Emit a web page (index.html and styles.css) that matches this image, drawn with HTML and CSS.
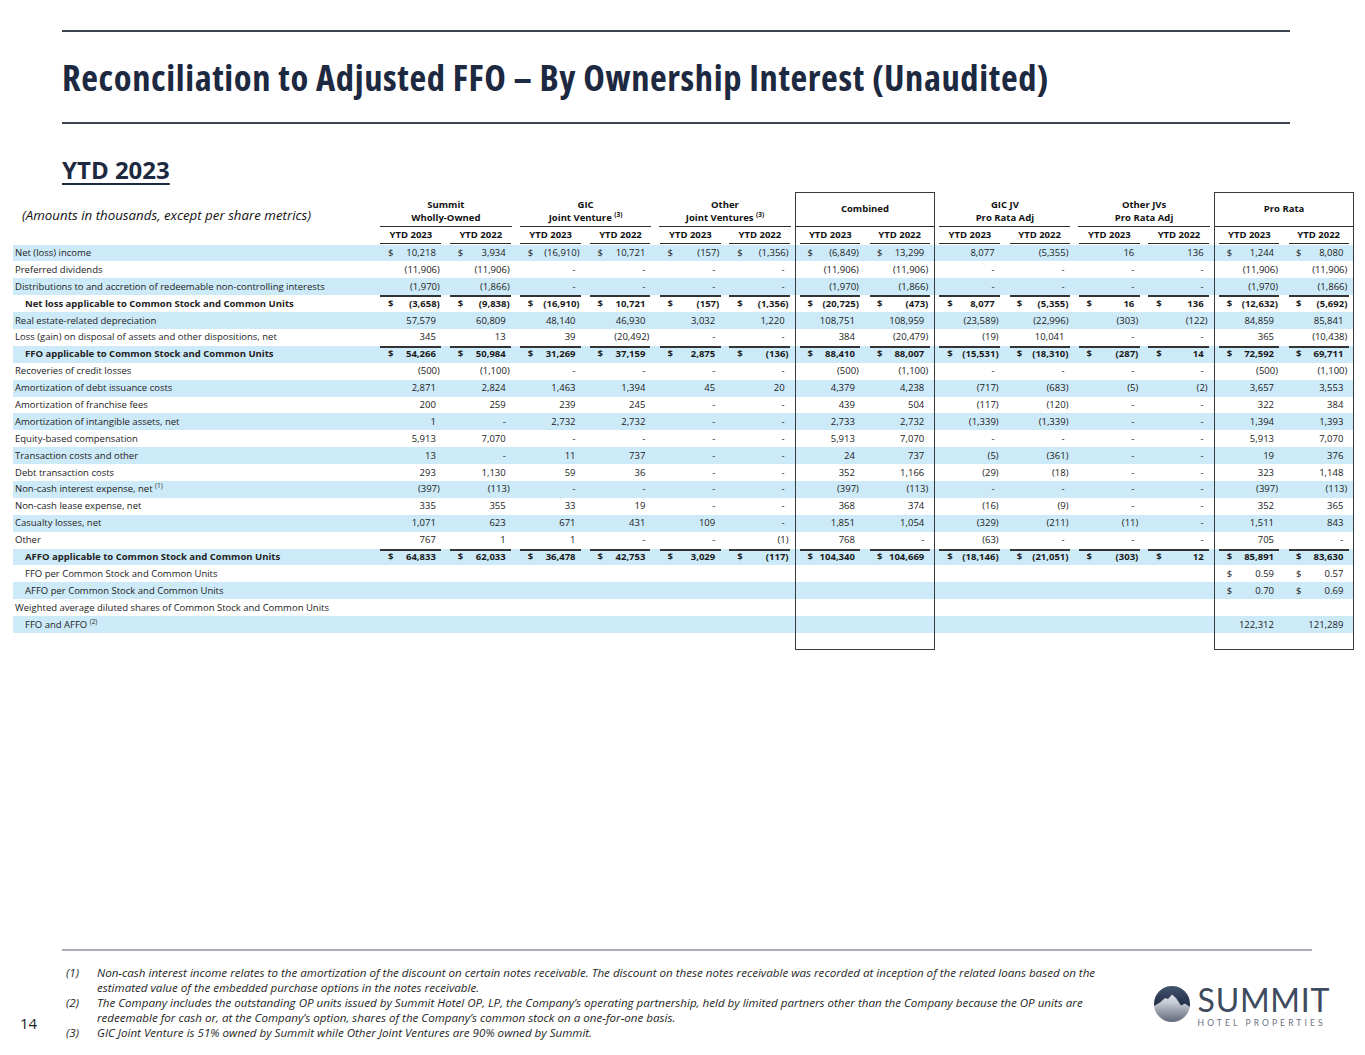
FILE: index.html
```html
<!DOCTYPE html>
<html lang="en">
<head>
<meta charset="utf-8">
<title>Reconciliation to Adjusted FFO</title>
<link rel="stylesheet" href="styles.css">
</head>
<body>
<div class="page">
  <header class="hdr">
    <h1 class="title">Reconciliation to Adjusted FFO – By Ownership Interest (Unaudited)</h1>
  </header>
  <h2 class="sub">YTD 2023</h2>

  <table class="tbl">
    <colgroup><col class="lc"></colgroup>
    <colgroup><col class="dc"><col class="dc"></colgroup>
    <colgroup><col class="dc"><col class="dc"></colgroup>
    <colgroup><col class="dc"><col class="dc"></colgroup>
    <colgroup class="box"><col class="dc"><col class="dc"></colgroup>
    <colgroup><col class="dc"><col class="dc"></colgroup>
    <colgroup><col class="dc"><col class="dc"></colgroup>
    <colgroup class="box"><col class="dc"><col class="dc"></colgroup>
    <thead>
      <tr class="ga">
        <th class="amt">(Amounts in thousands, except per share metrics)</th>
        <th colspan="2" class="g">Summit<br>Wholly-Owned</th>
        <th colspan="2" class="g">GIC<br>Joint Venture <sup>(3)</sup></th>
        <th colspan="2" class="g">Other<br>Joint Ventures <sup>(3)</sup></th>
        <th colspan="2" class="g gb">Combined</th>
        <th colspan="2" class="g">GIC JV<br>Pro Rata Adj</th>
        <th colspan="2" class="g">Other JVs<br>Pro Rata Adj</th>
        <th colspan="2" class="g gb">Pro Rata</th>
      </tr>
      <tr class="yr">
        <th class="blank"></th>
        <th>YTD 2023</th><th>YTD 2022</th>
        <th>YTD 2023</th><th>YTD 2022</th>
        <th>YTD 2023</th><th>YTD 2022</th>
        <th>YTD 2023</th><th>YTD 2022</th>
        <th>YTD 2023</th><th>YTD 2022</th>
        <th>YTD 2023</th><th>YTD 2022</th>
        <th>YTD 2023</th><th>YTD 2022</th>
      </tr>
    </thead>
    <tbody>
      <tr>
        <td class="l">Net (loss) income</td>
        <td><span class="c">$</span>10,218</td>
        <td><span class="c">$</span>3,934</td>
        <td class="n"><span class="c">$</span>(16,910)</td>
        <td><span class="c">$</span>10,721</td>
        <td class="n"><span class="c">$</span>(157)</td>
        <td class="n"><span class="c">$</span>(1,356)</td>
        <td class="n"><span class="c">$</span>(6,849)</td>
        <td><span class="c">$</span>13,299</td>
        <td>8,077</td>
        <td class="n">(5,355)</td>
        <td>16</td>
        <td>136</td>
        <td><span class="c">$</span>1,244</td>
        <td><span class="c">$</span>8,080</td>
      </tr>
      <tr>
        <td class="l">Preferred dividends</td>
        <td class="n">(11,906)</td><td class="n">(11,906)</td>
        <td>-</td><td>-</td><td>-</td><td>-</td>
        <td class="n">(11,906)</td><td class="n">(11,906)</td>
        <td>-</td><td>-</td><td>-</td><td>-</td>
        <td class="n">(11,906)</td><td class="n">(11,906)</td>
      </tr>
      <tr>
        <td class="l">Distributions to and accretion of redeemable non-controlling interests</td>
        <td class="n">(1,970)</td><td class="n">(1,866)</td>
        <td>-</td><td>-</td><td>-</td><td>-</td>
        <td class="n">(1,970)</td><td class="n">(1,866)</td>
        <td>-</td><td>-</td><td>-</td><td>-</td>
        <td class="n">(1,970)</td><td class="n">(1,866)</td>
      </tr>
      <tr class="t">
        <td class="l i">Net loss applicable to Common Stock and Common Units</td>
        <td class="n"><span class="c">$</span>(3,658)</td>
        <td class="n"><span class="c">$</span>(9,838)</td>
        <td class="n"><span class="c">$</span>(16,910)</td>
        <td><span class="c">$</span>10,721</td>
        <td class="n"><span class="c">$</span>(157)</td>
        <td class="n"><span class="c">$</span>(1,356)</td>
        <td class="n"><span class="c">$</span>(20,725)</td>
        <td class="n"><span class="c">$</span>(473)</td>
        <td><span class="c">$</span>8,077</td>
        <td class="n"><span class="c">$</span>(5,355)</td>
        <td><span class="c">$</span>16</td>
        <td><span class="c">$</span>136</td>
        <td class="n"><span class="c">$</span>(12,632)</td>
        <td class="n"><span class="c">$</span>(5,692)</td>
      </tr>
      <tr>
        <td class="l">Real estate-related depreciation</td>
        <td>57,579</td><td>60,809</td><td>48,140</td><td>46,930</td><td>3,032</td><td>1,220</td>
        <td>108,751</td><td>108,959</td>
        <td class="n">(23,589)</td><td class="n">(22,996)</td><td class="n">(303)</td><td class="n">(122)</td>
        <td>84,859</td><td>85,841</td>
      </tr>
      <tr>
        <td class="l">Loss (gain) on disposal of assets and other dispositions, net</td>
        <td>345</td><td>13</td><td>39</td><td class="n">(20,492)</td><td>-</td><td>-</td>
        <td>384</td><td class="n">(20,479)</td>
        <td class="n">(19)</td><td>10,041</td><td>-</td><td>-</td>
        <td>365</td><td class="n">(10,438)</td>
      </tr>
      <tr class="t">
        <td class="l i">FFO applicable to Common Stock and Common Units</td>
        <td><span class="c">$</span>54,266</td>
        <td><span class="c">$</span>50,984</td>
        <td><span class="c">$</span>31,269</td>
        <td><span class="c">$</span>37,159</td>
        <td><span class="c">$</span>2,875</td>
        <td class="n"><span class="c">$</span>(136)</td>
        <td><span class="c">$</span>88,410</td>
        <td><span class="c">$</span>88,007</td>
        <td class="n"><span class="c">$</span>(15,531)</td>
        <td class="n"><span class="c">$</span>(18,310)</td>
        <td class="n"><span class="c">$</span>(287)</td>
        <td><span class="c">$</span>14</td>
        <td><span class="c">$</span>72,592</td>
        <td><span class="c">$</span>69,711</td>
      </tr>
      <tr>
        <td class="l">Recoveries of credit losses</td>
        <td class="n">(500)</td><td class="n">(1,100)</td>
        <td>-</td><td>-</td><td>-</td><td>-</td>
        <td class="n">(500)</td><td class="n">(1,100)</td>
        <td>-</td><td>-</td><td>-</td><td>-</td>
        <td class="n">(500)</td><td class="n">(1,100)</td>
      </tr>
      <tr>
        <td class="l">Amortization of debt issuance costs</td>
        <td>2,871</td><td>2,824</td><td>1,463</td><td>1,394</td><td>45</td><td>20</td>
        <td>4,379</td><td>4,238</td>
        <td class="n">(717)</td><td class="n">(683)</td><td class="n">(5)</td><td class="n">(2)</td>
        <td>3,657</td><td>3,553</td>
      </tr>
      <tr>
        <td class="l">Amortization of franchise fees</td>
        <td>200</td><td>259</td><td>239</td><td>245</td><td>-</td><td>-</td>
        <td>439</td><td>504</td>
        <td class="n">(117)</td><td class="n">(120)</td><td>-</td><td>-</td>
        <td>322</td><td>384</td>
      </tr>
      <tr>
        <td class="l">Amortization of intangible assets, net</td>
        <td>1</td><td>-</td><td>2,732</td><td>2,732</td><td>-</td><td>-</td>
        <td>2,733</td><td>2,732</td>
        <td class="n">(1,339)</td><td class="n">(1,339)</td><td>-</td><td>-</td>
        <td>1,394</td><td>1,393</td>
      </tr>
      <tr>
        <td class="l">Equity-based compensation</td>
        <td>5,913</td><td>7,070</td><td>-</td><td>-</td><td>-</td><td>-</td>
        <td>5,913</td><td>7,070</td>
        <td>-</td><td>-</td><td>-</td><td>-</td>
        <td>5,913</td><td>7,070</td>
      </tr>
      <tr>
        <td class="l">Transaction costs and other</td>
        <td>13</td><td>-</td><td>11</td><td>737</td><td>-</td><td>-</td>
        <td>24</td><td>737</td>
        <td class="n">(5)</td><td class="n">(361)</td><td>-</td><td>-</td>
        <td>19</td><td>376</td>
      </tr>
      <tr>
        <td class="l">Debt transaction costs</td>
        <td>293</td><td>1,130</td><td>59</td><td>36</td><td>-</td><td>-</td>
        <td>352</td><td>1,166</td>
        <td class="n">(29)</td><td class="n">(18)</td><td>-</td><td>-</td>
        <td>323</td><td>1,148</td>
      </tr>
      <tr>
        <td class="l">Non-cash interest expense, net <sup>(1)</sup></td>
        <td class="n">(397)</td><td class="n">(113)</td><td>-</td><td>-</td><td>-</td><td>-</td>
        <td class="n">(397)</td><td class="n">(113)</td>
        <td>-</td><td>-</td><td>-</td><td>-</td>
        <td class="n">(397)</td><td class="n">(113)</td>
      </tr>
      <tr>
        <td class="l">Non-cash lease expense, net</td>
        <td>335</td><td>355</td><td>33</td><td>19</td><td>-</td><td>-</td>
        <td>368</td><td>374</td>
        <td class="n">(16)</td><td class="n">(9)</td><td>-</td><td>-</td>
        <td>352</td><td>365</td>
      </tr>
      <tr>
        <td class="l">Casualty losses, net</td>
        <td>1,071</td><td>623</td><td>671</td><td>431</td><td>109</td><td>-</td>
        <td>1,851</td><td>1,054</td>
        <td class="n">(329)</td><td class="n">(211)</td><td class="n">(11)</td><td>-</td>
        <td>1,511</td><td>843</td>
      </tr>
      <tr>
        <td class="l">Other</td>
        <td>767</td><td>1</td><td>1</td><td>-</td><td>-</td><td class="n">(1)</td>
        <td>768</td><td>-</td>
        <td class="n">(63)</td><td>-</td><td>-</td><td>-</td>
        <td>705</td><td>-</td>
      </tr>
      <tr class="t">
        <td class="l i">AFFO applicable to Common Stock and Common Units</td>
        <td><span class="c">$</span>64,833</td>
        <td><span class="c">$</span>62,033</td>
        <td><span class="c">$</span>36,478</td>
        <td><span class="c">$</span>42,753</td>
        <td><span class="c">$</span>3,029</td>
        <td class="n"><span class="c">$</span>(117)</td>
        <td><span class="c">$</span>104,340</td>
        <td><span class="c">$</span>104,669</td>
        <td class="n"><span class="c">$</span>(18,146)</td>
        <td class="n"><span class="c">$</span>(21,051)</td>
        <td class="n"><span class="c">$</span>(303)</td>
        <td><span class="c">$</span>12</td>
        <td><span class="c">$</span>85,891</td>
        <td><span class="c">$</span>83,630</td>
      </tr>
      <tr>
        <td class="l ii">FFO per Common Stock and Common Units</td>
        <td></td><td></td><td></td><td></td><td></td><td></td>
        <td></td><td></td><td></td><td></td><td></td><td></td>
        <td><span class="c">$</span>0.59</td><td><span class="c">$</span>0.57</td>
      </tr>
      <tr>
        <td class="l ii">AFFO per Common Stock and Common Units</td>
        <td></td><td></td><td></td><td></td><td></td><td></td>
        <td></td><td></td><td></td><td></td><td></td><td></td>
        <td><span class="c">$</span>0.70</td><td><span class="c">$</span>0.69</td>
      </tr>
      <tr>
        <td class="l">Weighted average diluted shares of Common Stock and Common Units</td>
        <td></td><td></td><td></td><td></td><td></td><td></td>
        <td></td><td></td><td></td><td></td><td></td><td></td>
        <td></td><td></td>
      </tr>
      <tr>
        <td class="l ii">FFO and AFFO <sup>(2)</sup></td>
        <td></td><td></td><td></td><td></td><td></td><td></td>
        <td></td><td></td><td></td><td></td><td></td><td></td>
        <td>122,312</td><td>121,289</td>
      </tr>
      <tr class="end">
        <td class="l"></td>
        <td></td><td></td><td></td><td></td><td></td><td></td>
        <td></td><td></td><td></td><td></td><td></td><td></td>
        <td></td><td></td>
      </tr>
    </tbody>
  </table>

  <footer class="ftr">
    <div class="rule"></div>
    <div class="frow">
      <div class="pg">14</div>
      <ol class="notes">
        <li><span class="num">(1)</span><span class="txt">Non-cash interest income relates to the amortization of the discount on certain notes receivable. The discount on these notes receivable was recorded at inception of the related loans based on the<br>estimated value of the embedded purchase options in the notes receivable.</span></li>
        <li><span class="num">(2)</span><span class="txt">The Company includes the outstanding OP units issued by Summit Hotel OP, LP, the Company’s operating partnership, held by limited partners other than the Company because the OP units are<br>redeemable for cash or, at the Company’s option, shares of the Company’s common stock on a one-for-one basis.</span></li>
        <li><span class="num">(3)</span><span class="txt">GIC Joint Venture is 51% owned by Summit while Other Joint Ventures are 90% owned by Summit.</span></li>
      </ol>
      <div class="logo">
        <svg class="mark" viewBox="0 0 36 36" width="36" height="36" aria-hidden="true">
          <defs>
            <linearGradient id="sky" x1="0" y1="0" x2="0" y2="1">
              <stop offset="0" stop-color="#44536f"/>
              <stop offset="1" stop-color="#1e2b45"/>
            </linearGradient>
            <linearGradient id="ground" x1="0" y1="0" x2="0" y2="1">
              <stop offset="0" stop-color="#f4f5f7"/>
              <stop offset="0.45" stop-color="#c9cdd4"/>
              <stop offset="1" stop-color="#5f6879"/>
            </linearGradient>
            <clipPath id="disc"><circle cx="18" cy="18" r="18"/></clipPath>
          </defs>
          <g clip-path="url(#disc)">
            <rect width="36" height="36" fill="url(#ground)"/>
            <path d="M0 0H36V21L31 17.5L27 19.5L22 12L18 8.5L14 13L11 12L6 16.5L0 20Z" fill="url(#sky)"/>
          </g>
        </svg>
        <div class="wordmark">
          <div class="brand">SUMMIT</div>
          <div class="tag">HOTEL PROPERTIES</div>
        </div>
      </div>
    </div>
  </footer>
</div>
</body>
</html>
```
FILE: styles.css
```css
* { box-sizing: border-box; }

body {
  margin: 0;
  background: #ffffff;
  font-family: "Open Sans", "Noto Sans", sans-serif;
  color: #1a1a1a;
}

.page {
  width: 1365px;
  height: 1055px;
  display: flex;
  flex-direction: column;
  overflow: hidden;
}

/* ---------- heading ---------- */
.hdr {
  margin: 30px 75px 0 62px;
  height: 94px;
  border-top: 2px solid #3b4350;
  border-bottom: 2px solid #3b4350;
  display: flex;
  align-items: center;
}

.title {
  margin: 0;
  font-family: "Open Sans", sans-serif;
  font-weight: 700;
  font-stretch: 75%;
  font-size: 36.5px;
  letter-spacing: 0.6px;
  color: #1d2940;
  white-space: nowrap;
}

.sub {
  margin: 32px 0 0 62px;
  font-size: 24px;
  line-height: 28px;
  font-weight: 700;
  color: #1d2940;
  text-decoration: underline;
  text-decoration-thickness: 2px;
  text-underline-offset: 4px;
}

/* ---------- table ---------- */
.tbl {
  margin: 8px 0 0 13px;
  width: 1341px;
  table-layout: fixed;
  border-collapse: collapse;
  font-size: 9.5px;
}

.lc { width: 363px; }
.dc { width: 69.857px; }

.box { border: 1px solid #3a3a3a; }

.tbl th {
  padding: 0;
  font-weight: 700;
  color: #111;
}

.ga th { height: 34px; }

.g {
  vertical-align: bottom;
  line-height: 13px;
  padding-bottom: 3px !important;
  text-align: center;
  background: linear-gradient(#2b2b2b, #2b2b2b) no-repeat 50% 100% / calc(100% - 8px) 1px;
}

.gb {
  vertical-align: middle;
  background-size: 100% 1px;
}

.amt {
  vertical-align: bottom;
  text-align: left;
  padding: 0 0 3px 9px !important;
  font-size: 13.3px;
  font-style: italic;
  font-weight: 400 !important;
  color: #222;
  white-space: nowrap;
}

sup {
  font-size: 6.5px;
  line-height: 0;
  vertical-align: 4px;
}

.yr th {
  height: 18px;
  padding-bottom: 2px;
  text-align: center;
  font-size: 9.5px;
  background: linear-gradient(#2b2b2b, #2b2b2b) no-repeat 50% calc(100% - 1px) / calc(100% - 9px) 1px;
}

.yr th.blank { background: none; }

.tbl tbody tr:nth-child(odd) { background: #cdeaf8; }

.tbl td {
  height: 16.9px;
  padding: 0 10px 0 12px;
  text-align: right;
  white-space: nowrap;
  line-height: 14px;
}

.tbl td.n { padding-right: 6px; }

.tbl td.l {
  text-align: left;
  padding: 0 0 0 2px;
  color: #222;
}

.tbl td.i,
.tbl td.ii { padding-left: 12px; }

.c { float: left; }
.tbl td.n .c { margin-right: -4px; }

.t td { font-weight: 700; }
.t td:not(.l) {
  background: linear-gradient(#333, #333) no-repeat 50% 0 / calc(100% - 9px) 2px;
}

/* ---------- footer ---------- */
.ftr {
  margin-top: auto;
  padding-bottom: 15px;
}

.rule {
  margin-left: 62px;
  width: 1250px;
  border-top: 2px solid #a8acb4;
}

.frow {
  display: flex;
  align-items: flex-start;
  margin-top: 14px;
}

.pg {
  width: 66px;
  padding-left: 20px;
  margin-top: 49px;
  font-size: 15px;
  line-height: 18px;
  color: #222;
}

.notes {
  margin: 0;
  padding: 0;
  list-style: none;
  font-size: 11.6px;
  line-height: 15px;
  font-style: italic;
  color: #1f1f1f;
  white-space: nowrap;
}

.notes li { display: flex; }
.num { width: 31px; flex: none; }

.logo {
  margin: 21px 35px 0 auto;
  display: flex;
  align-items: flex-start;
  gap: 8px;
}

.mark { display: block; }

.wordmark {
  display: flex;
  flex-direction: column;
  align-items: flex-start;
}

.brand {
  font-family: "Lato", sans-serif;
  font-size: 32px;
  line-height: 28px;
  letter-spacing: 0.7px;
  color: #3e4a5e;
}

.tag {
  margin-top: 4px;
  font-family: "Lato", sans-serif;
  font-size: 8.5px;
  letter-spacing: 3.1px;
  color: #6a7282;
}
```
